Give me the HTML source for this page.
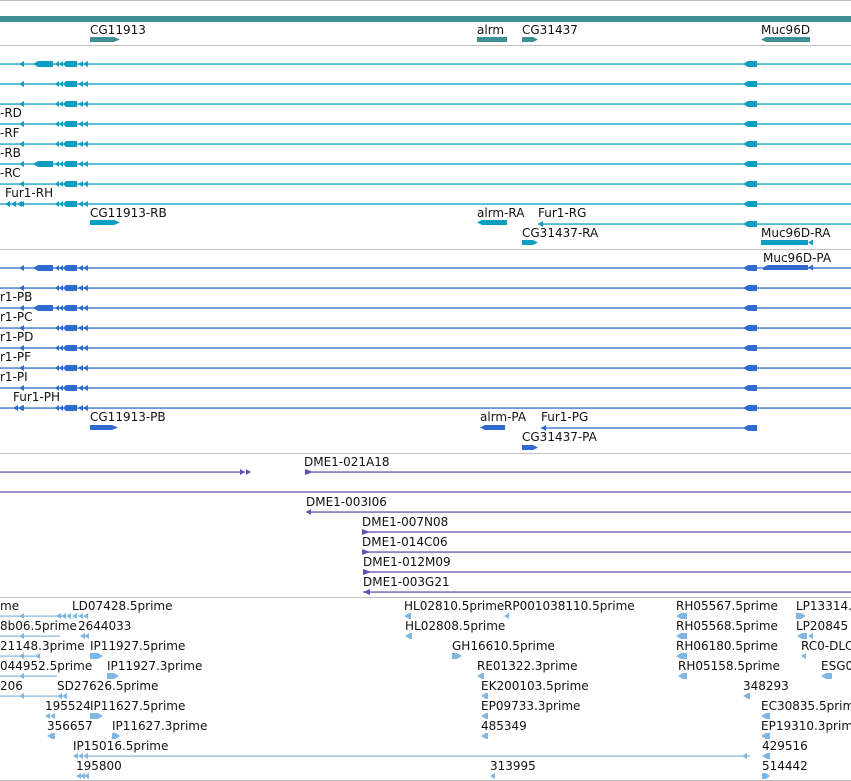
<!DOCTYPE html>
<html><head><meta charset="utf-8"><style>
html,body{margin:0;padding:0;background:#fff;}
svg{display:block;}
text{font-family:"DejaVu Sans","Liberation Sans",sans-serif;font-size:12px;fill:#111;}
</style></head><body>
<svg width="851" height="781" viewBox="0 0 851 781" xmlns="http://www.w3.org/2000/svg">
<defs>
<g id="furC">
 <polygon points="19,0 24,-3 24,3"/>
 <polygon points="55,0 59,-3 59,3"/><polygon points="59,0 63,-3 63,3"/>
 <polygon points="63,0 66,-3 77,-3 77,3 66,3"/>
 <polygon points="78,0 83,-3 83,3"/><polygon points="83,0 88,-3 88,3"/>
 <polygon points="743,0 748,-3 757,-3 757,3 748,3"/>
</g>
<g id="big"><polygon points="33,0 38,-3 53,-3 53,3 38,3"/></g>
<polygon id="la" points="0,0 5,-3 5,3"/>
<polygon id="ra" points="0,-3 5,0 0,3"/>
</defs>
<!-- separators -->
<g fill="#c0c0c0">
<rect x="0" y="0" width="851" height="1"/>
<rect x="0" y="45" width="851" height="1"/>
<rect x="0" y="249" width="851" height="1"/>
<rect x="0" y="453" width="851" height="1"/>
<rect x="0" y="597" width="851" height="1"/>
<rect x="0" y="780" width="851" height="1"/>
</g>
<!-- gene track -->
<g fill="#3d8f93">
<rect x="0" y="16" width="851" height="6"/>
<polygon points="90,37 114,37 120,39.5 114,42 90,42"/>
<rect x="477" y="37" width="30" height="5"/>
<polygon points="522,37 533,37 538,39.5 533,42 522,42"/>
<polygon points="761,39.5 766,37 810,37 810,42 766,42"/>
</g>
<text x="90" y="34">CG11913</text><text x="477" y="34">alrm</text><text x="522" y="34">CG31437</text><text x="761" y="34">Muc96D</text>

<!-- cyan transcripts -->
<g fill="#0b9ec0" stroke="none">
<g id="cy">
<rect x="0" y="63.4" width="851" height="1.3"/><use href="#furC" y="64"/><use href="#big" y="64"/>
</g>
<rect x="0" y="83.4" width="851" height="1.3"/><use href="#furC" y="84"/>
<rect x="0" y="103.4" width="851" height="1.3"/><use href="#furC" y="104"/>
<rect x="0" y="123.4" width="851" height="1.3"/><use href="#furC" y="124"/>
<rect x="0" y="143.4" width="851" height="1.3"/><use href="#furC" y="144"/>
<rect x="0" y="163.4" width="851" height="1.3"/><use href="#furC" y="164"/><use href="#big" y="164"/>
<rect x="0" y="183.4" width="851" height="1.3"/><use href="#furC" y="184"/>
<rect x="0" y="203.4" width="851" height="1.3"/><use href="#furC" y="204"/>
<use href="#la" x="5" y="204"/><use href="#la" x="11" y="204"/><use href="#la" x="17" y="204"/>
<polygon points="90,220 114,220 120,222.5 114,225 90,225"/>
<polygon points="477,222.5 482,220 507,220 507,225 482,225"/>
<rect x="538" y="223.4" width="313" height="1.3"/><use href="#la" x="538" y="224"/>
<polygon points="743,224 748,221 757,221 757,227 748,227"/>
<polygon points="522,240 533,240 538,242.5 533,245 522,245"/>
<polygon points="761,240 808,240 808,245 761,245"/><use href="#la" x="808" y="242.5"/>
</g>
<text x="0" y="117">-RD</text><text x="0" y="137">-RF</text><text x="0" y="157">-RB</text><text x="0" y="177">-RC</text>
<text x="5" y="197">Fur1-RH</text>
<text x="90" y="217">CG11913-RB</text><text x="477" y="217">alrm-RA</text><text x="538" y="217">Fur1-RG</text>
<text x="522" y="237">CG31437-RA</text><text x="761" y="237">Muc96D-RA</text>

<!-- blue transcripts -->
<g fill="#2f6bcf">
<rect x="0" y="267.4" width="851" height="1.3"/><use href="#furC" y="268"/><use href="#big" y="268"/>
<rect x="0" y="287.4" width="851" height="1.3"/><use href="#furC" y="288"/>
<rect x="0" y="307.4" width="851" height="1.3"/><use href="#furC" y="308"/><use href="#big" y="308"/>
<rect x="0" y="327.4" width="851" height="1.3"/><use href="#furC" y="328"/>
<rect x="0" y="347.4" width="851" height="1.3"/><use href="#furC" y="348"/>
<rect x="0" y="367.4" width="851" height="1.3"/><use href="#furC" y="368"/>
<rect x="0" y="387.4" width="851" height="1.3"/><use href="#furC" y="388"/>
<rect x="0" y="407.4" width="851" height="1.3"/><use href="#furC" y="408"/>
<use href="#la" x="13" y="408"/><use href="#la" x="18" y="408"/>
<polygon points="90,425 112,425 118,427.5 112,430 90,430"/>
<polygon points="480,427.5 485,425 505,425 505,430 485,430"/>
<rect x="541" y="427.4" width="216" height="1.3"/><use href="#la" x="541" y="428"/>
<polygon points="743,428 748,425 757,425 757,431 748,431"/>
<polygon points="522,445 533,445 538,447.5 533,450 522,450"/>
<polygon points="763,267.5 768,265 808,265 808,270 763,270"/><use href="#la" x="808" y="267.5"/>
</g>
<text x="763" y="262">Muc96D-PA</text>
<text x="0" y="301">r1-PB</text><text x="0" y="321">r1-PC</text><text x="0" y="341">r1-PD</text><text x="0" y="361">r1-PF</text><text x="0" y="381">r1-PI</text>
<text x="13" y="401">Fur1-PH</text>
<text x="90" y="421">CG11913-PB</text><text x="480" y="421">alrm-PA</text><text x="541" y="421">Fur1-PG</text>
<text x="522" y="441">CG31437-PA</text>

<!-- purple clones -->
<g fill="#6a4fae">
<rect x="0" y="471.4" width="245" height="1.3"/><use href="#ra" x="240" y="472"/><use href="#ra" x="246" y="472"/>
<rect x="305" y="471.4" width="546" height="1.3"/><polygon points="305,469 313,472 305,475"/>
<rect x="0" y="491.4" width="851" height="1.3"/>
<rect x="306" y="511.4" width="545" height="1.3"/><use href="#la" x="306" y="512"/>
<rect x="362" y="531.4" width="489" height="1.3"/><polygon points="362,529 370,532 362,535"/>
<rect x="362" y="551.4" width="489" height="1.3"/><polygon points="362,549 370,552 362,555"/>
<rect x="363" y="571.4" width="488" height="1.3"/><polygon points="363,569 371,572 363,575"/>
<rect x="363" y="591.4" width="488" height="1.3"/><polygon points="363,592 370,589 370,595"/>
</g>
<text x="304" y="466">DME1-021A18</text><text x="306" y="506">DME1-003I06</text>
<text x="362" y="526">DME1-007N08</text><text x="362" y="546">DME1-014C06</text>
<text x="363" y="566">DME1-012M09</text><text x="363" y="586">DME1-003G21</text>

<!-- ESTs -->
<g fill="#80b7e0">
<rect x="0" y="615.5" width="62" height="1.2"/><use href="#la" x="19" y="616"/><use href="#la" x="56" y="616"/><use href="#la" x="61" y="616"/><use href="#la" x="66" y="616"/>
<use href="#la" x="72" y="616"/><use href="#la" x="78" y="616"/><use href="#la" x="83" y="616"/>
<rect x="0" y="635.5" width="60" height="1.2"/><use href="#la" x="19" y="636"/><use href="#la" x="80" y="636"/><use href="#la" x="84" y="636"/>
<rect x="0" y="655.5" width="40" height="1.2"/><use href="#la" x="19" y="656"/><use href="#la" x="35" y="656"/><polygon points="90,653 98,653 103,656 98,659 90,659"/>
<rect x="0" y="675.5" width="57" height="1.2"/><use href="#la" x="19" y="676"/><polygon points="107,673 114,673 119,676 114,679 107,679"/>
<rect x="0" y="695.5" width="66" height="1.2"/><use href="#la" x="19" y="696"/><use href="#la" x="57" y="696"/><use href="#la" x="62" y="696"/>
<use href="#la" x="45" y="716"/><use href="#la" x="50" y="716"/><polygon points="90,713 98,713 103,716 98,719 90,719"/>
<polygon points="47,736 52,733 55,733 55,739 52,739"/><polygon points="112,733 116,733 120,736 116,739 112,739"/>
<use href="#la" x="73" y="756"/><use href="#la" x="78" y="756"/><use href="#la" x="83" y="756"/><rect x="88" y="755.5" width="662" height="1.2"/><use href="#la" x="742" y="756"/>
<use href="#la" x="76" y="776"/><use href="#la" x="80" y="776"/><use href="#la" x="84" y="776"/>
<polygon points="404,616 409,613 411,613 411,619 409,619"/><use href="#la" x="504" y="616"/>
<polygon points="405,636 410,633 412,633 412,639 410,639"/>
<polygon points="452,653 457,653 462,656 457,659 452,659"/>
<polygon points="477,676 482,673 484,673 484,679 482,679"/>
<polygon points="481,696 486,693 488,693 488,699 486,699"/>
<polygon points="481,716 486,713 488,713 488,719 486,719"/>
<polygon points="481,736 486,733 488,733 488,739 486,739"/>
<use href="#la" x="490" y="776"/>
<polygon points="676,616 681,613 687,613 687,619 681,619"/><polygon points="796,613 801,613 806,616 801,619 796,619"/>
<polygon points="676,636 681,633 687,633 687,639 681,639"/><polygon points="797,636 802,633 807,633 807,639 802,639"/><use href="#la" x="808" y="636"/>
<polygon points="676,656 681,653 687,653 687,659 681,659"/><use href="#la" x="801" y="656"/>
<polygon points="678,676 683,673 687,673 687,679 683,679"/><polygon points="821,676 826,673 832,673 832,679 826,679"/>
<polygon points="743,696 748,693 750,693 750,699 748,699"/>
<polygon points="761,716 766,713 770,713 770,719 766,719"/>
<polygon points="761,736 766,733 770,733 770,739 766,739"/>
<polygon points="762,756 767,753 770,753 770,759 767,759"/>
<polygon points="762,773 766,773 770,776 766,779 762,779"/>
</g>
<text x="0" y="610">me</text><text x="72" y="610">LD07428.5prime</text>
<text x="0" y="630">8b06.5prime</text><text x="78" y="630">2644033</text>
<text x="0" y="650">21148.3prime</text><text x="90" y="650">IP11927.5prime</text>
<text x="0" y="670">044952.5prime</text><text x="107" y="670">IP11927.3prime</text>
<text x="0" y="690">206</text><text x="57" y="690">SD27626.5prime</text>
<text x="45" y="710">195524</text><text x="90" y="710">IP11627.5prime</text>
<text x="47" y="730">356657</text><text x="112" y="730">IP11627.3prime</text>
<text x="73" y="750">IP15016.5prime</text>
<text x="76" y="770">195800</text>
<text x="404" y="610">HL02810.5prime</text><text x="504" y="610">RP001038110.5prime</text>
<text x="405" y="630">HL02808.5prime</text>
<text x="452" y="650">GH16610.5prime</text>
<text x="477" y="670">RE01322.3prime</text>
<text x="481" y="690">EK200103.5prime</text>
<text x="481" y="710">EP09733.3prime</text>
<text x="481" y="730">485349</text>
<text x="490" y="770">313995</text>
<text x="676" y="610">RH05567.5prime</text><text x="796" y="610">LP13314.5prime</text>
<text x="676" y="630">RH05568.5prime</text><text x="796" y="630">LP20845</text>
<text x="676" y="650">RH06180.5prime</text><text x="801" y="650">RC0-DLC</text>
<text x="678" y="670">RH05158.5prime</text><text x="821" y="670">ESG0</text>
<text x="743" y="690">348293</text>
<text x="761" y="710">EC30835.5prime</text>
<text x="761" y="730">EP19310.3prime</text>
<text x="762" y="750">429516</text>
<text x="762" y="770">514442</text>
</svg>
</body></html>
